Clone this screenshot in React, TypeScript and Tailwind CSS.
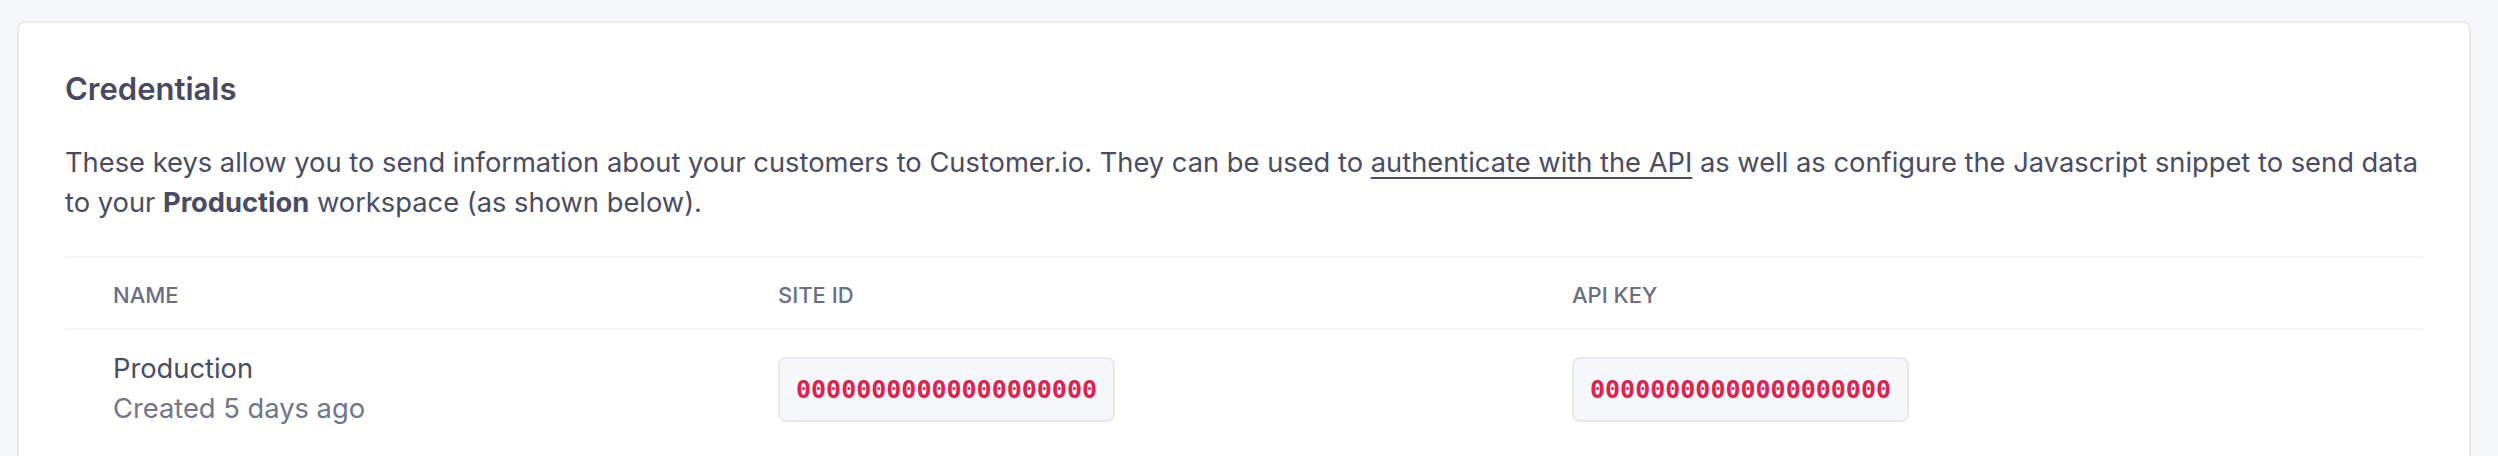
import React from 'react'

const keys = [
  {
    name: "Production",
    created: "Created 5 days ago",
    siteId: "00000000000000000000",
    apiKey: "00000000000000000000",
  },
];

function KeyBox({ value }: { value: string }) {
  return (
    <div className="inline-flex h-[65px] items-center rounded-[8px] border-2 border-[#e7e8ed] bg-[#f6f7f9] px-[16px]">
      <code className="font-['DejaVu_Sans_Mono','Liberation_Mono',monospace] text-[25px] font-bold leading-none text-[#dd2250]">
        {value}
      </code>
    </div>
  );
}

export default function App() {
  return (
    <div className="min-h-[456px] bg-[#f6f7f9] pl-[17px] pr-[27px] pt-[21px] font-['Inter','Noto_Sans',sans-serif]">
      <div className="rounded-t-[8px] border-2 border-b-0 border-[#e8e9ee] bg-white px-[46px] pb-[40px] pt-[46px]">
        <h2 className="text-[31px] font-semibold leading-[40px] text-[#474a61]">Credentials</h2>

        <p className="mt-[34px] text-[27.3px] leading-[40px] text-[#4a4c63]">
          These keys allow you to send information about your customers to Customer.io. They can be used to{" "}
          <a href="#" className="underline decoration-2 underline-offset-[5px]">authenticate with the API</a>{" "}
          as well as configure the Javascript snippet to send data to your <strong className="font-bold">Production</strong> workspace (as shown below).
        </p>

        {/* Keys table */}
        <div className="mt-[33px] border-t-2 border-[#f2f3f5]">
          <div className="grid grid-cols-[665px_794px_1fr] border-b-2 border-[#f2f3f5] pb-[17px] pt-[21px] text-[22px] font-medium uppercase leading-[32px] text-[#6a6f85]">
            <div className="pl-[48px]">Name</div>
            <div className="pl-[48px]">Site ID</div>
            <div className="pl-[48px]">API Key</div>
          </div>

          {keys.map((k) => (
            <div key={k.name} className="grid grid-cols-[665px_794px_1fr] items-center pt-[19px] pb-[20px]">
              <div className="pl-[48px] text-[27.3px] leading-[40px]">
                <div className="text-[#4a4c63]">{k.name}</div>
                <div className="text-[#70758b]">{k.created}</div>
              </div>
              <div className="pl-[48px]">
                <KeyBox value={k.siteId} />
              </div>
              <div className="pl-[48px]">
                <KeyBox value={k.apiKey} />
              </div>
            </div>
          ))}
        </div>
      </div>
    </div>
  )
}
